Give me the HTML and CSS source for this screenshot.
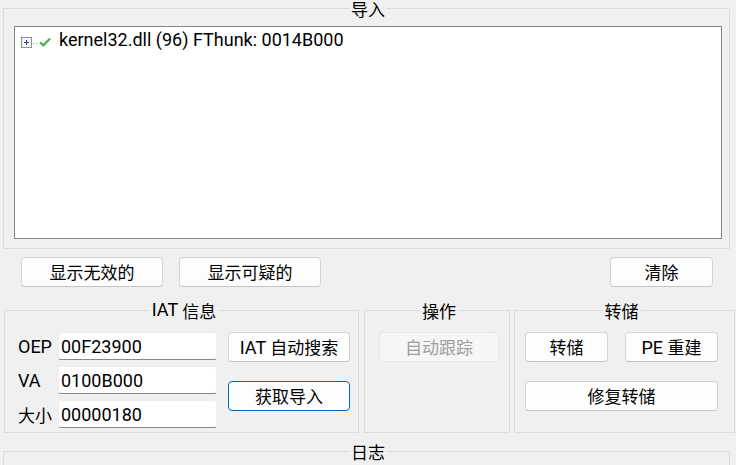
FILE: index.html
```html
<!DOCTYPE html>
<html lang="zh-CN">
<head>
<meta charset="utf-8">
<title>Scylla</title>
<link rel="stylesheet" href="styles.css">
</head>
<body>
<div class="app">
  <fieldset class="group imports">
    <legend><span class="zh">导入</span></legend>
    <div class="tree">
      <div class="tree-item">
        <svg class="expander" width="18" height="11" viewBox="0 0 18 11">
          <rect x="0.5" y="0.5" width="10" height="10" fill="#f4f4f4" stroke="#8f8f8f"/>
          <path d="M3 5.5h5M5.5 3v5" stroke="#2a3f8f" stroke-width="1"/>
          <rect x="12" y="6" width="1" height="1" fill="#9a9a9a"/>
          <rect x="15" y="6" width="1" height="1" fill="#9a9a9a"/>
        </svg>
        <svg class="check" width="12" height="10" viewBox="0 0 12 10">
          <path d="M1 5.2 L4.3 8.4 L11 1.4" fill="none" stroke="#4caf50" stroke-width="2.2" stroke-linejoin="round"/>
        </svg>
        <span class="tree-label">kernel32.dll (96) FThunk: 0014B000</span>
      </div>
    </div>
  </fieldset>

  <div class="toolbar">
    <div class="toolbar-left">
      <button class="btn btn-show"><span class="zh">显示无效的</span></button>
      <button class="btn btn-show"><span class="zh">显示可疑的</span></button>
    </div>
    <button class="btn btn-clear"><span class="zh">清除</span></button>
  </div>

  <div class="panels">
    <fieldset class="group iat">
      <legend>IAT <span class="zh">信息</span></legend>
      <div class="iat-body">
        <div class="fields">
          <label class="field-label">OEP</label>
          <input class="edit" type="text" value="00F23900">
          <label class="field-label">VA</label>
          <input class="edit" type="text" value="0100B000">
          <label class="field-label"><span class="zh">大小</span></label>
          <input class="edit" type="text" value="00000180">
        </div>
        <div class="iat-buttons">
          <button class="btn btn-iat">IAT <span class="zh">自动搜索</span></button>
          <button class="btn btn-iat btn-default"><span class="zh">获取导入</span></button>
        </div>
      </div>
    </fieldset>

    <fieldset class="group actions">
      <legend><span class="zh">操作</span></legend>
      <button class="btn btn-trace" disabled><span class="zh">自动跟踪</span></button>
    </fieldset>

    <fieldset class="group dump">
      <legend><span class="zh">转储</span></legend>
      <div class="dump-row">
        <button class="btn btn-dump"><span class="zh">转储</span></button>
        <button class="btn btn-rebuild">PE <span class="zh">重建</span></button>
      </div>
      <button class="btn btn-fix"><span class="zh">修复转储</span></button>
    </fieldset>
  </div>

  <fieldset class="group log">
    <legend><span class="zh">日志</span></legend>
    <div class="log-box"></div>
  </fieldset>
</div>
</body>
</html>
```

FILE: styles.css
```css
html, body {
  margin: 0;
  padding: 0;
}

body {
  background: #f0f0f0;
  font-family: Roboto, "Liberation Sans", "Noto Sans CJK SC", sans-serif;
  font-size: 18px;
  color: #000;
  width: 736px;
  height: 465px;
  overflow: hidden;
}

.zh {
  font-family: "Noto Sans CJK SC", sans-serif;
  font-size: 17px;
}

.app {
  display: flex;
  flex-direction: column;
}

.group {
  margin: 0;
  padding: 0;
  min-width: 0;
  border: 1px solid #dcdcdc;
  box-sizing: border-box;
}

.group > legend {
  margin: 0 auto;
  padding: 0 2px;
  line-height: 16px;
  height: 16px;
  white-space: nowrap;
}

.group > legend .zh {
  vertical-align: -2px;
}

/* Imports */
.imports {
  margin-left: 3px;
  width: 727px;
  height: 249px;
  padding: 10px 7px 9px 10px;
}

.tree {
  box-sizing: border-box;
  width: 708px;
  height: 213px;
  background: #fff;
  border: 1px solid #828790;
}

.tree-item {
  display: flex;
  align-items: flex-start;
  height: 22px;
  line-height: 22px;
  margin-top: 2px;
  padding-left: 6px;
}

.expander {
  display: block;
  margin-top: 8px;
  flex: none;
}

.check {
  display: block;
  margin-top: 8px;
  flex: none;
}

.tree-label {
  margin-left: 8px;
  white-space: nowrap;
}

/* Toolbar */
.toolbar {
  display: flex;
  justify-content: space-between;
  margin-top: 8px;
  padding: 0 23px 0 21px;
}

.toolbar-left {
  display: flex;
  gap: 16px;
}

.btn {
  box-sizing: border-box;
  height: 30px;
  padding: 0;
  margin: 0;
  font: inherit;
  color: #000;
  background: #fdfdfd;
  border: 1px solid #d3d3d3;
  border-bottom-color: #c4c4c4;
  border-radius: 4px;
  line-height: 1;
  white-space: nowrap;
}

.btn-show { width: 142px; }
.btn-clear { width: 103px; }

.btn-default {
  border: 1px solid #0067c0;
}

.btn:disabled {
  background: #f6f6f6;
  border-color: #e6e6e6;
  color: #9d9d9d;
}

/* Panels */
.panels {
  display: flex;
  margin-top: 15px;
  padding-left: 4px;
}

.panels .group {
  height: 131px;
}

.iat {
  width: 355px;
  padding: 14px 8px 4px 13px;
}

.iat-body {
  display: flex;
  gap: 11px;
}

.fields {
  display: grid;
  grid-template-columns: 40px 159px;
  grid-auto-rows: 28px;
  row-gap: 6px;
  align-items: center;
}

.field-label {
  white-space: nowrap;
}

.edit {
  box-sizing: border-box;
  width: 159px;
  height: 28px;
  margin: 0;
  padding: 0 2px;
  font: inherit;
  color: #000;
  background: #fff;
  border: 1px solid #ededed;
  border-bottom: 1px solid #888;
  border-radius: 3px;
  outline: none;
}

.iat-buttons {
  display: flex;
  flex-direction: column;
  gap: 19px;
}

.btn-iat { width: 122px; }

.actions {
  width: 146px;
  margin-left: 5px;
  padding: 14px 10px 4px 14px;
}

.btn-trace { width: 120px; }

.dump {
  width: 221px;
  margin-left: 4px;
  padding: 14px 16px 4px 10px;
  display: flex;
  flex-direction: column;
  gap: 19px;
}

.dump-row {
  display: flex;
  gap: 17px;
}

.btn-dump { width: 83px; }
.btn-rebuild { width: 93px; }
.btn-fix { width: 193px; }

/* Log */
.log {
  margin: 10px 0 0 3px;
  width: 727px;
  height: 80px;
  padding: 6px 7px 9px 10px;
}

.log-box {
  height: 40px;
}
```
